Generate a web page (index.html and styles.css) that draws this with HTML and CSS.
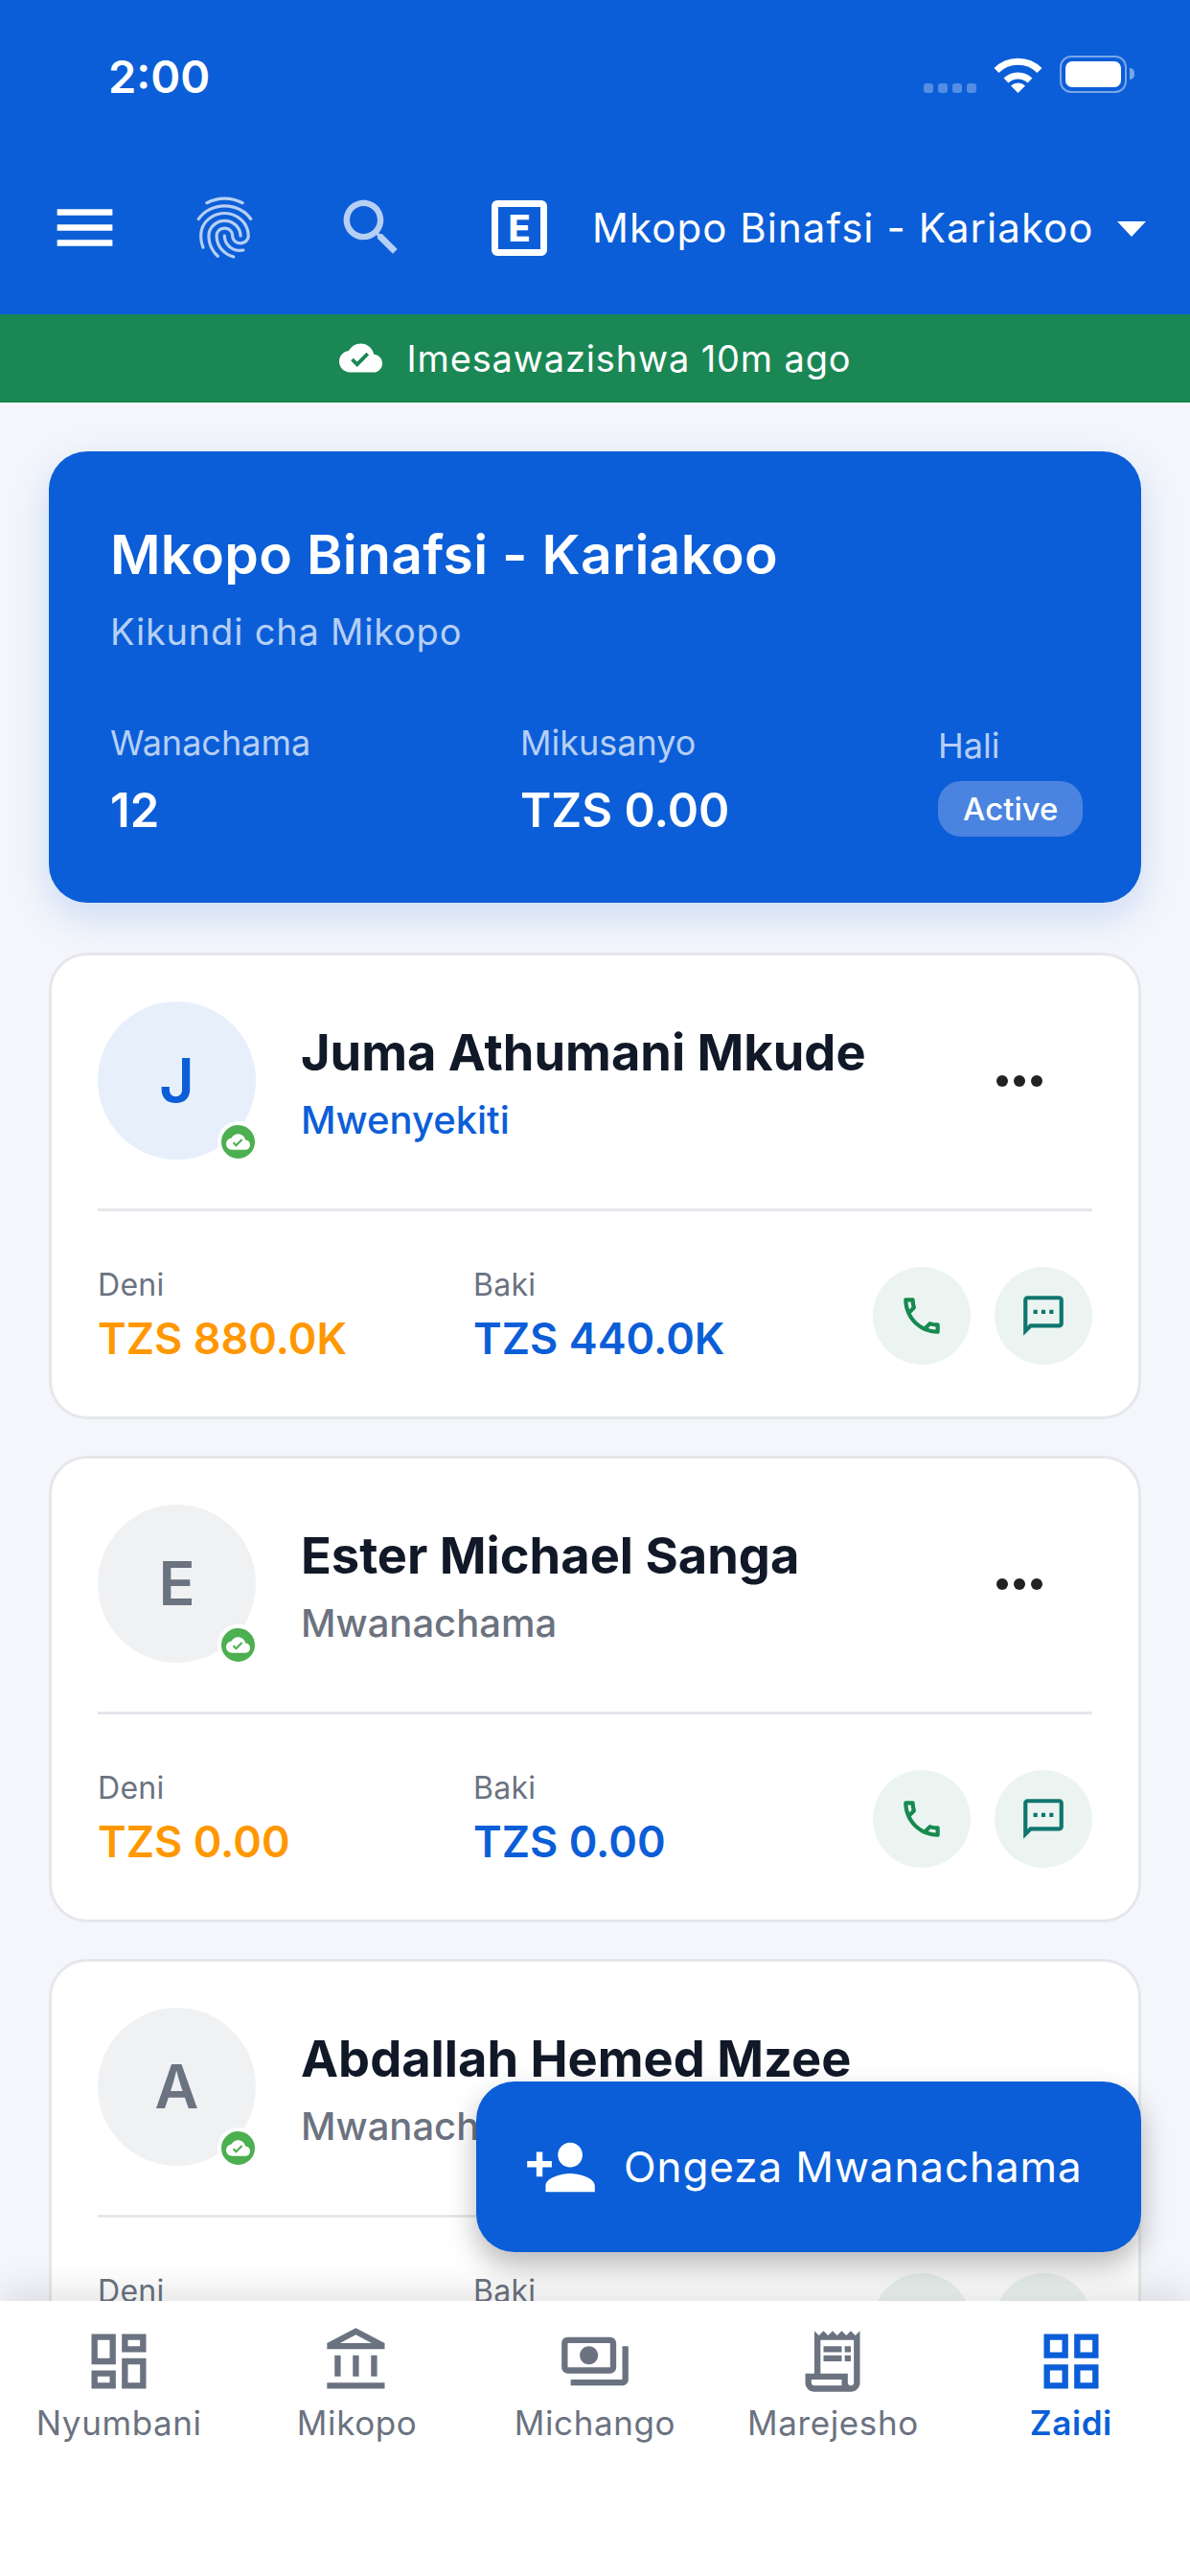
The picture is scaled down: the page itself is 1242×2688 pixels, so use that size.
FILE: index.html
```html
<!DOCTYPE html>
<html lang="en">
<head>
    <meta charset="UTF-8">
    <title>Wanachama</title>
    <link rel="stylesheet" href="styles.css">
</head>
<body>
    <svg class="icon-defs" width="0" height="0">
        <symbol id="i-cloud" viewBox="0 0 24 24"><path d="M19.35 10.04C18.67 6.59 15.64 4 12 4 9.11 4 6.6 5.64 5.35 8.04 2.34 8.36 0 10.91 0 14c0 3.31 2.69 6 6 6h13c2.76 0 5-2.24 5-5 0-2.64-2.05-4.78-4.65-4.96zM10 17l-3.5-3.5 1.41-1.41L10 14.17l5.18-5.18 1.41 1.41L10 17z"/></symbol>
        <symbol id="i-call" viewBox="0 0 24 24"><path d="M6.54 5c.06.89.21 1.76.45 2.59l-1.2 1.2c-.41-1.2-.67-2.47-.76-3.79h1.51m9.86 12.02c.85.24 1.72.39 2.6.45v1.49c-1.32-.09-2.59-.35-3.8-.75l1.2-1.19M7.5 3H4c-.55 0-1 .45-1 1 0 9.39 7.61 17 17 17 .55 0 1-.45 1-1v-3.49c0-.55-.45-1-1-1-1.24 0-2.45-.2-3.57-.57-.1-.04-.21-.05-.31-.05-.26 0-.51.1-.71.29l-2.2 2.2c-2.83-1.45-5.15-3.76-6.59-6.59l2.2-2.2c.28-.28.36-.67.25-1.02C8.7 6.45 8.5 5.25 8.5 4c0-.55-.45-1-1-1z"/></symbol>
        <symbol id="i-sms" viewBox="0 0 24 24"><path d="M20 2H4c-1.1 0-1.99.9-1.99 2L2 22l4-4h14c1.1 0 2-.9 2-2V4c0-1.1-.9-2-2-2zm0 14H5.17L4 17.17V4h16v12zM7 9h2v2H7zm8 0h2v2h-2zm-4 0h2v2h-2z"/></symbol>
        <symbol id="i-more" viewBox="0 0 24 24"><circle cx="6" cy="12" r="2"/><circle cx="12" cy="12" r="2"/><circle cx="18" cy="12" r="2"/></symbol>
    </svg>

    <header class="app-header">
        <div class="status-bar">
            <span class="clock">2:00</span>
            <div class="status-icons">
                <div class="signal"><i></i><i></i><i></i><i></i></div>
                <svg class="wifi" viewBox="0 0 51 39">
                    <path class="wifi-arc" d="M3 15.5a32 32 0 0 1 45 0"/>
                    <path class="wifi-arc" d="M13 26a18 18 0 0 1 25 0"/>
                    <path d="M18 31.5a11 11 0 0 1 15 0L25.5 39z" fill="#fff"/>
                </svg>
                <div class="battery"><div class="battery-fill"></div></div>
                <div class="battery-cap"></div>
            </div>
        </div>
        <div class="toolbar">
            <svg class="tb-icon tb-menu" viewBox="0 0 24 24"><path d="M3 18h18v-2H3v2zm0-5h18v-2H3v2zm0-7v2h18V6H3z"/></svg>
            <svg class="tb-icon tb-finger" viewBox="0 0 24 24"><path d="M17.81 4.47c-.08 0-.16-.02-.23-.06C15.66 3.42 14 3 12.01 3c-1.98 0-3.86.47-5.58 1.41-.24.13-.54.04-.68-.2-.13-.24-.04-.55.2-.68C7.82 2.52 9.86 2 12.01 2c2.13 0 3.99.47 6.03 1.52.25.13.34.43.21.67-.09.18-.26.28-.44.28zM3.5 9.72c-.1 0-.2-.03-.29-.09-.23-.16-.28-.47-.12-.7.99-1.4 2.25-2.5 3.75-3.27C9.98 4.04 14 4.03 17.15 5.65c1.5.77 2.76 1.86 3.75 3.25.16.22.11.54-.12.7-.23.16-.54.11-.7-.12-.9-1.26-2.04-2.25-3.39-2.94-2.87-1.47-6.54-1.47-9.4.01-1.36.7-2.5 1.7-3.4 2.96-.08.14-.23.21-.39.21zm6.25 12.07c-.13 0-.26-.05-.35-.15-.87-.87-1.34-1.43-2.01-2.64-.69-1.23-1.05-2.73-1.05-4.34 0-2.97 2.54-5.39 5.66-5.39s5.66 2.42 5.66 5.39c0 .28-.22.5-.5.5s-.5-.22-.5-.5c0-2.42-2.09-4.39-4.66-4.39-2.57 0-4.66 1.97-4.66 4.39 0 1.44.32 2.77.93 3.85.64 1.15 1.08 1.64 1.85 2.42.19.2.19.51 0 .71-.11.1-.24.15-.37.15zm7.17-1.85c-1.19 0-2.24-.3-3.1-.89-1.49-1.01-2.38-2.65-2.38-4.39 0-.28.22-.5.5-.5s.5.22.5.5c0 1.41.72 2.74 1.94 3.56.71.48 1.54.71 2.54.71.24 0 .64-.03 1.04-.1.27-.05.53.13.58.41.05.27-.13.53-.41.58-.57.11-1.07.12-1.21.12zM14.91 22c-.04 0-.09-.01-.13-.02-1.59-.44-2.63-1.03-3.72-2.1-1.4-1.39-2.17-3.24-2.17-5.22 0-1.62 1.38-2.94 3.08-2.94 1.7 0 3.08 1.32 3.08 2.94 0 1.07.93 1.94 2.08 1.94s2.08-.87 2.08-1.94c0-3.77-3.25-6.83-7.25-6.83-2.84 0-5.44 1.58-6.61 4.03-.39.81-.59 1.76-.59 2.8 0 .78.07 2.01.67 3.61.1.26-.03.55-.29.64-.26.1-.55-.04-.64-.29-.49-1.31-.73-2.61-.73-3.96 0-1.2.23-2.29.68-3.24 1.33-2.79 4.28-4.6 7.51-4.6 4.55 0 8.25 3.51 8.25 7.83 0 1.62-1.38 2.94-3.08 2.94s-3.08-1.32-3.08-2.94c0-1.07-.93-1.94-2.08-1.94s-2.08.87-2.08 1.94c0 1.71.66 3.31 1.87 4.51.95.94 1.86 1.46 3.27 1.85.27.07.42.35.35.61-.05.23-.26.38-.47.38z"/></svg>
            <svg class="tb-icon tb-search" viewBox="0 0 24 24"><path d="M15.5 14h-.79l-.28-.27C15.41 12.59 16 11.11 16 9.5 16 5.91 13.09 3 9.5 3S3 5.91 3 9.5 5.91 16 9.5 16c1.61 0 3.09-.59 4.23-1.57l.27.28v.79l5 4.99L20.49 19l-4.99-5zm-6 0C7.01 14 5 11.99 5 9.5S7.01 5 9.5 5 14 7.01 14 9.5 11.99 14 9.5 14z"/></svg>
            <div class="e-box">E</div>
            <span class="tb-title">Mkopo Binafsi - Kariakoo</span>
            <div class="tb-caret"></div>
        </div>
    </header>

    <div class="sync-bar">
        <svg class="sync-icon"><use href="#i-cloud"/></svg>
        <span>Imesawazishwa 10m ago</span>
    </div>

    <main class="content">
        <section class="hero">
            <h1>Mkopo Binafsi - Kariakoo</h1>
            <p class="hero-sub">Kikundi cha Mikopo</p>
            <div class="hero-stats">
                <div class="hero-stat stat-members">
                    <span class="hero-label">Wanachama</span>
                    <span class="hero-value">12</span>
                </div>
                <div class="hero-stat stat-total">
                    <span class="hero-label">Mikusanyo</span>
                    <span class="hero-value">TZS 0.00</span>
                </div>
                <div class="hero-stat">
                    <span class="hero-label">Hali</span>
                    <span class="pill">Active</span>
                </div>
            </div>
        </section>

        <article class="member">
            <div class="member-top">
                <div class="avatar avatar-blue">J
                    <div class="avatar-badge"><svg><use href="#i-cloud"/></svg></div>
                </div>
                <div class="member-info">
                    <h2>Juma Athumani Mkude</h2>
                    <p class="role role-lead">Mwenyekiti</p>
                </div>
                <svg class="more"><use href="#i-more"/></svg>
            </div>
            <div class="member-bottom">
                <div class="money">
                    <span class="money-label">Deni</span>
                    <span class="money-value orange">TZS 880.0K</span>
                </div>
                <div class="money">
                    <span class="money-label">Baki</span>
                    <span class="money-value blue">TZS 440.0K</span>
                </div>
                <div class="round-btn"><svg class="call"><use href="#i-call"/></svg></div>
                <div class="round-btn"><svg class="sms"><use href="#i-sms"/></svg></div>
            </div>
        </article>

        <article class="member">
            <div class="member-top">
                <div class="avatar">E
                    <div class="avatar-badge"><svg><use href="#i-cloud"/></svg></div>
                </div>
                <div class="member-info">
                    <h2>Ester Michael Sanga</h2>
                    <p class="role">Mwanachama</p>
                </div>
                <svg class="more"><use href="#i-more"/></svg>
            </div>
            <div class="member-bottom">
                <div class="money">
                    <span class="money-label">Deni</span>
                    <span class="money-value orange">TZS 0.00</span>
                </div>
                <div class="money">
                    <span class="money-label">Baki</span>
                    <span class="money-value blue">TZS 0.00</span>
                </div>
                <div class="round-btn"><svg class="call"><use href="#i-call"/></svg></div>
                <div class="round-btn"><svg class="sms"><use href="#i-sms"/></svg></div>
            </div>
        </article>

        <article class="member">
            <div class="member-top">
                <div class="avatar">A
                    <div class="avatar-badge"><svg><use href="#i-cloud"/></svg></div>
                </div>
                <div class="member-info">
                    <h2>Abdallah Hemed Mzee</h2>
                    <p class="role">Mwanachama</p>
                </div>
            </div>
            <div class="member-bottom">
                <div class="money">
                    <span class="money-label">Deni</span>
                    <span class="money-value orange">TZS 0.00</span>
                </div>
                <div class="money">
                    <span class="money-label">Baki</span>
                    <span class="money-value blue">TZS 0.00</span>
                </div>
                <div class="round-btn"><svg class="call"><use href="#i-call"/></svg></div>
                <div class="round-btn"><svg class="sms"><use href="#i-sms"/></svg></div>
            </div>
        </article>
    </main>

    <button class="fab">
        <svg viewBox="0 0 24 24"><path d="M15 12c2.21 0 4-1.79 4-4s-1.79-4-4-4-4 1.79-4 4 1.79 4 4 4zm-9-2V7H4v3H1v2h3v3h2v-3h3v-2H6zm9 4c-2.67 0-8 1.34-8 4v2h16v-2c0-2.66-5.33-4-8-4z"/></svg>
        <span>Ongeza Mwanachama</span>
    </button>

    <nav class="tabbar">
        <div class="tab">
            <svg viewBox="0 0 24 24"><path d="M19 5v2h-4V5h4M9 5v6H5V5h4m10 8v6h-4v-6h4M9 17v2H5v-2h4M21 3h-8v6h8V3zM11 3H3v10h8V3zm10 8h-8v10h8V11zm-10 4H3v6h8v-6z"/></svg>
            <span>Nyumbani</span>
        </div>
        <div class="tab">
            <svg viewBox="0 0 24 24"><path d="M6.5 10h-2v7h2v-7zm6 0h-2v7h2v-7zm8.5 9H2v2h19v-2zm-2.5-9h-2v7h2v-7zm-7-6.74L16.71 6H6.29l5.21-2.74m0-2.26L2 6v2h19V6l-9.5-5z"/></svg>
            <span>Mikopo</span>
        </div>
        <div class="tab">
            <svg viewBox="0 0 24 24"><path d="M19 14V6c0-1.1-.9-2-2-2H3c-1.1 0-2 .9-2 2v8c0 1.1.9 2 2 2h14c1.1 0 2-.9 2-2zm-2 0H3V6h14v8zm-7-7c-1.66 0-3 1.34-3 3s1.34 3 3 3 3-1.34 3-3-1.34-3-3-3zm13 0v11c0 1.1-.9 2-2 2H4v-2h17V7h2z"/></svg>
            <span>Michango</span>
        </div>
        <div class="tab">
            <svg viewBox="0 0 24 24"><path d="M19.5 3.5 18 2l-1.5 1.5L15 2l-1.5 1.5L12 2l-1.5 1.5L9 2 7.5 3.5 6 2v14H3v3c0 1.66 1.34 3 3 3h12c1.66 0 3-1.34 3-3V2l-1.5 1.5zM15 20H6c-.55 0-1-.45-1-1v-1h10v2zm4-1c0 .55-.45 1-1 1s-1-.45-1-1v-3H8V5h11v14z"/><path d="M9 7h6v2H9zM16 7h2v2h-2zM9 10h6v2H9zM16 10h2v2h-2z"/></svg>
            <span>Marejesho</span>
        </div>
        <div class="tab tab-active">
            <svg viewBox="0 0 24 24"><path d="M3 3v8h8V3H3zm6 6H5V5h4v4zm-6 4v8h8v-8H3zm6 6H5v-4h4v4zm4-16v8h8V3h-8zm6 6h-4V5h4v4zm-6 4v8h8v-8h-8zm6 6h-4v-4h4v4z"/></svg>
            <span>Zaidi</span>
        </div>
    </nav>
</body>
</html>
```

FILE: styles.css
```css
* {
    box-sizing: border-box;
}

body {
    font-family: 'Inter', 'Liberation Sans', sans-serif;
    margin: 0;
    width: 1242px;
    height: 2688px;
    overflow: hidden;
    position: relative;
    background-color: #f4f6fb;
    color: #111827;
    display: flex;
    flex-direction: column;
}

.icon-defs {
    display: block;
    flex: none;
}

h1, h2, p {
    margin: 0;
}

/* header */

.app-header {
    background-color: #0b5ed7;
    height: 328px;
    flex: none;
}

.status-bar {
    height: 162px;
    padding: 52px 0 0 113px;
    display: flex;
    justify-content: space-between;
    color: #fff;
}

.clock {
    font-size: 47px;
    line-height: 56px;
    font-weight: 600;
}

.status-icons {
    display: flex;
    align-items: flex-start;
    padding: 6px 58px 0 0;
}

.signal {
    display: flex;
    gap: 5px;
    margin: 29px 18px 0 0;
}

.signal i {
    width: 10px;
    height: 10px;
    border-radius: 3px;
    background-color: rgba(255, 255, 255, 0.3);
}

.wifi {
    width: 51px;
    height: 39px;
}

.wifi-arc {
    fill: none;
    stroke: #fff;
    stroke-width: 7;
}

.battery {
    width: 70px;
    height: 39px;
    margin-left: 18px;
    padding: 4px;
    border: 2px solid rgba(255, 255, 255, 0.45);
    border-radius: 12px;
}

.battery-fill {
    height: 100%;
    background-color: #fff;
    border-radius: 7px;
}

.battery-cap {
    width: 5px;
    height: 12px;
    margin: 13px 0 0 3px;
    background-color: rgba(255, 255, 255, 0.45);
    border-radius: 0 5px 5px 0;
}

.toolbar {
    display: flex;
    align-items: center;
    padding: 37px 0 0 50px;
}

.tb-icon {
    width: 77px;
    height: 77px;
    flex: none;
    fill: #b6cff5;
}

.tb-menu {
    fill: #fff;
}

.tb-finger {
    margin-left: 69px;
}

.tb-search {
    margin-left: 76px;
}

.e-box {
    width: 58px;
    height: 58px;
    margin-left: 87px;
    border: 7px solid #fff;
    border-radius: 6px;
    color: #fff;
    font-size: 38px;
    font-weight: 800;
    line-height: 44px;
    text-align: center;
}

.tb-title {
    margin-left: 47px;
    color: #fff;
    font-size: 42px;
    letter-spacing: 1.05px;
}

.tb-caret {
    margin: 2px 0 0 24px;
    border-left: 15px solid transparent;
    border-right: 15px solid transparent;
    border-top: 16px solid #fff;
}

/* sync */

.sync-bar {
    height: 92px;
    flex: none;
    background-color: #1a8754;
    border-bottom: 1px solid #14803f;
    color: #fff;
    font-size: 38px;
    letter-spacing: 0.85px;
    display: flex;
    align-items: center;
    justify-content: center;
    gap: 26px;
}

.sync-icon {
    width: 45px;
    height: 45px;
    fill: #fff;
}

/* content */

.content {
    flex: 1;
    min-height: 0;
    overflow: hidden;
    padding: 51px 51px 0;
    display: flex;
    flex-direction: column;
    gap: 38px;
}

.content > * {
    flex: none;
}

.hero {
    height: 471px;
    margin-bottom: 14px;
    padding: 75px 40px 0 64px;
    background-color: #0b5ed7;
    border-radius: 40px;
    color: #fff;
    box-shadow: 0 14px 40px rgba(11, 94, 215, 0.18);
}

.hero h1 {
    font-size: 57px;
    line-height: 66px;
    font-weight: 600;
    letter-spacing: 0.3px;
}

.hero-sub {
    margin-top: 25px;
    font-size: 38px;
    line-height: 44px;
    letter-spacing: 0.8px;
    color: #b6cff5;
}

.hero-stats {
    display: flex;
    align-items: center;
    margin-top: 72px;
}

.hero-stat {
    display: flex;
    flex-direction: column;
    align-items: flex-start;
}

.stat-members {
    width: 428px;
}

.stat-total {
    width: 436px;
}

.hero-label {
    font-size: 36px;
    line-height: 44px;
    color: #b6cff5;
}

.hero-value {
    margin-top: 20px;
    font-size: 49px;
    line-height: 58px;
    font-weight: 600;
}

.pill {
    margin-top: 15px;
    height: 58px;
    padding: 0 26px;
    border-radius: 24px;
    background-color: #4a84e0;
    font-size: 33px;
    font-weight: 500;
    line-height: 58px;
}

/* member cards */

.member {
    height: 487px;
    padding: 48px 48px 0;
    background-color: #fff;
    border: 3px solid #e5e7eb;
    border-radius: 40px;
}

.member-top {
    display: flex;
    align-items: center;
    height: 219px;
    padding-bottom: 51px;
    border-bottom: 3px solid #e5e7eb;
}

.avatar {
    width: 165px;
    height: 165px;
    flex: none;
    position: relative;
    border-radius: 50%;
    background-color: #f0f1f3;
    color: #6b7280;
    font-size: 63px;
    font-weight: 600;
    line-height: 165px;
    text-align: center;
}

.avatar-blue {
    background-color: #e7effb;
    color: #0b5ed7;
}

.avatar-badge {
    position: absolute;
    right: -3px;
    bottom: -3px;
    width: 43px;
    height: 43px;
    padding: 5px;
    border: 4px solid #fff;
    border-radius: 50%;
    background-color: #4caf50;
    display: flex;
}

.avatar-badge svg {
    width: 100%;
    height: 100%;
    fill: #fff;
}

.member-info {
    margin: 5px 0 0 47px;
    flex: 1;
}

.member-info h2 {
    font-size: 52.4px;
    line-height: 60px;
    font-weight: 700;
}

.role {
    margin-top: 17px;
    font-size: 40px;
    line-height: 48px;
    font-weight: 500;
    color: #6b7280;
}

.role-lead {
    color: #0b5ed7;
}

.more {
    width: 72px;
    height: 72px;
    margin-right: 40px;
    fill: #222;
}

.member-bottom {
    display: flex;
    align-items: center;
    gap: 25px;
    margin-top: 57px;
}

.money {
    display: flex;
    flex-direction: column;
}

.money:first-child {
    width: 367px;
}

.money:nth-child(2) {
    flex: 1;
}

.money-label {
    font-size: 32px;
    line-height: 40px;
    letter-spacing: 0.3px;
    color: #6b7280;
}

.money-value {
    margin-top: 9px;
    font-size: 45px;
    line-height: 54px;
    font-weight: 600;
}

.orange {
    color: #ff9800;
}

.blue {
    color: #0b5ed7;
}

.round-btn {
    width: 102px;
    height: 102px;
    flex: none;
    border-radius: 50%;
    background-color: #ecf4f2;
    display: flex;
    align-items: center;
    justify-content: center;
}

.call, .sms {
    width: 50px;
    height: 50px;
}

.call {
    fill: #178a50;
}

.sms {
    fill: #0f766e;
}

/* add button, sits above the list */

.fab {
    position: absolute;
    left: 497px;
    top: 2172px;
    z-index: 2;
    width: 694px;
    height: 178px;
    border: none;
    border-radius: 40px;
    background-color: #0b5ed7;
    box-shadow: 0 14px 30px rgba(0, 0, 0, 0.28);
    color: #fff;
    font-family: inherit;
    font-size: 44px;
    letter-spacing: 0.9px;
    display: flex;
    align-items: center;
    padding: 0 0 0 50px;
    gap: 27px;
}

.fab svg {
    width: 77px;
    height: 77px;
    fill: #fff;
}

/* bottom tabs */

.tabbar {
    height: 287px;
    flex: none;
    position: relative;
    z-index: 1;
    background-color: #fff;
    box-shadow: 0 -10px 36px rgba(0, 0, 0, 0.11);
    display: flex;
    padding-top: 25px;
}

.tab {
    flex: 1;
    display: flex;
    flex-direction: column;
    align-items: center;
    color: #6b7280;
    font-size: 35px;
    letter-spacing: 0.6px;
}

.tab svg {
    width: 76px;
    height: 76px;
    fill: #6b7280;
}

.tab span {
    margin-top: 5px;
}

.tab-active {
    color: #0b5ed7;
    font-weight: 600;
}

.tab-active svg {
    fill: #0b5ed7;
}
```
